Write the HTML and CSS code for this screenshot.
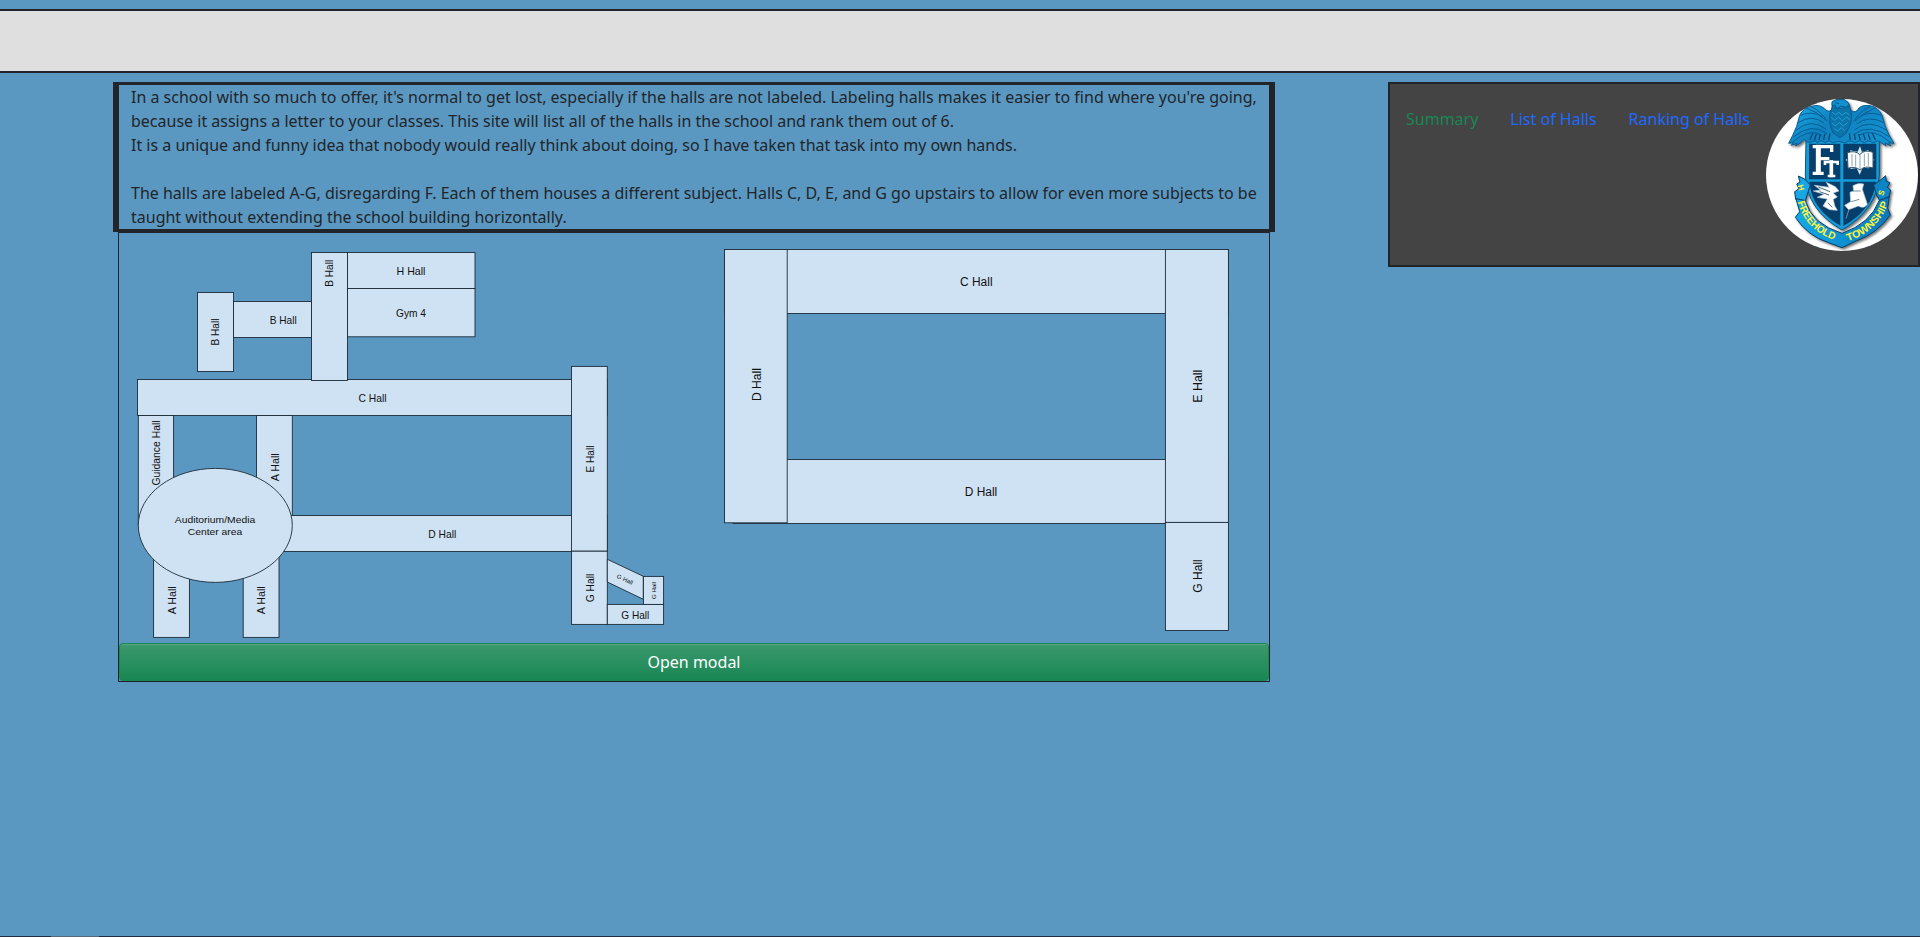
FILE: index.html
```html
<!DOCTYPE html>
<html lang="en">
<head>
<meta charset="utf-8">
<title>Halls</title>
<link rel="stylesheet" href="styles.css">
</head>
<body>
<header class="banner"></header>
<div class="layout">
  <main class="content">
    <p class="intro">In a school with so much to offer, it's normal to get lost, especially if the halls are not labeled. Labeling halls makes it easier to find where you're going, because it assigns a letter to your classes. This site will list all of the halls in the school and rank them out of 6.<br>It is a unique and funny idea that nobody would really think about doing, so I have taken that task into my own hands.<br><br>The halls are labeled A-G, disregarding F. Each of them houses a different subject. Halls C, D, E, and G go upstairs to allow for even more subjects to be taught without extending the school building horizontally.</p>
    <section class="card">
      <div class="maps">
        <svg class="map" viewBox="119 233 575 410">
          <g class="hall">
            <rect x="197.5" y="292.5" width="36" height="79"/>
            <rect x="233.5" y="301.5" width="78" height="36"/>
            <rect x="137.5" y="379.5" width="470" height="36"/>
            <rect x="311.5" y="252.5" width="36" height="128"/>
            <rect x="347.5" y="252.5" width="127.5" height="36"/>
            <rect x="347.5" y="288.5" width="127.5" height="48.3"/>
            <rect x="138.3" y="415.5" width="35.3" height="110"/>
            <rect x="256.5" y="415.5" width="35.8" height="110"/>
            <rect x="230.5" y="515.5" width="377" height="36"/>
            <rect x="153.6" y="540" width="35.8" height="97.4"/>
            <rect x="243.2" y="540" width="35.8" height="97.4"/>
            <ellipse cx="215.3" cy="525.4" rx="77" ry="57"/>
            <rect x="571.5" y="366.4" width="35.8" height="184.8"/>
            <rect x="571.5" y="551.2" width="35.8" height="73.2"/>
            <path d="M607.3 559.3 643.3 576.3V599.3L607.3 582z"/>
            <rect x="607.3" y="604.4" width="56.3" height="20"/>
            <rect x="643.4" y="576.4" width="20.2" height="28"/>
          </g>
          <g class="label">
            <text x="283.2" y="323.8" textLength="27" lengthAdjust="spacingAndGlyphs">B Hall</text>
            <text x="411" y="274.5" textLength="29" lengthAdjust="spacingAndGlyphs">H Hall</text>
            <text x="411" y="317.3" textLength="30" lengthAdjust="spacingAndGlyphs">Gym 4</text>
            <text x="372.5" y="401.6" textLength="28" lengthAdjust="spacingAndGlyphs">C Hall</text>
            <text x="442.3" y="537.7" textLength="28" lengthAdjust="spacingAndGlyphs">D Hall</text>
            <text x="635.3" y="618.5" textLength="28" lengthAdjust="spacingAndGlyphs">G Hall</text>
            <text transform="translate(219.2 332) rotate(-90)" textLength="27" lengthAdjust="spacingAndGlyphs">B Hall</text>
            <text transform="translate(332.8 273.3) rotate(-90)" textLength="27" lengthAdjust="spacingAndGlyphs">B Hall</text>
            <text transform="translate(160 453) rotate(-90)" textLength="65" lengthAdjust="spacingAndGlyphs">Guidance Hall</text>
            <text transform="translate(278.5 467.3) rotate(-90)" textLength="28" lengthAdjust="spacingAndGlyphs">A Hall</text>
            <text transform="translate(175.5 600.3) rotate(-90)" textLength="28" lengthAdjust="spacingAndGlyphs">A Hall</text>
            <text transform="translate(264.7 600.3) rotate(-90)" textLength="28" lengthAdjust="spacingAndGlyphs">A Hall</text>
            <text transform="translate(593.5 459) rotate(-90)" textLength="27" lengthAdjust="spacingAndGlyphs">E Hall</text>
            <text transform="translate(593.5 588) rotate(-90)" textLength="28.500" lengthAdjust="spacingAndGlyphs">G Hall</text>
          </g>
          <g class="label wide">
            <text x="215" y="523" textLength="80.5" lengthAdjust="spacingAndGlyphs">Auditorium/Media</text>
            <text x="215" y="535" textLength="54.5" lengthAdjust="spacingAndGlyphs">Center area</text>
          </g>
          <g class="label tiny">
            <text transform="translate(624 581.3) rotate(25)" textLength="17" lengthAdjust="spacingAndGlyphs">G Hall</text>
            <text transform="translate(656 590.5) rotate(-90)" textLength="17" lengthAdjust="spacingAndGlyphs">G Hall</text>
          </g>
        </svg>
        <svg class="map" viewBox="694 233 575 410">
          <g class="hall">
            <rect x="733" y="459.5" width="495" height="64"/>
            <rect x="724.5" y="249.5" width="504" height="64"/>
            <rect x="724.5" y="249.5" width="62.7" height="273.300"/>
            <rect x="1165.4" y="249.5" width="63" height="272.900"/>
            <rect x="1165.4" y="522.4" width="63" height="108.100"/>
          </g>
          <g class="label tall">
            <text x="976.3" y="286" textLength="32.500" lengthAdjust="spacingAndGlyphs">C Hall</text>
            <text x="981" y="495.8" textLength="32.500" lengthAdjust="spacingAndGlyphs">D Hall</text>
            <text transform="translate(760.6 384.5) rotate(-90)" textLength="33" lengthAdjust="spacingAndGlyphs">D Hall</text>
            <text transform="translate(1202 386.2) rotate(-90)" textLength="33" lengthAdjust="spacingAndGlyphs">E Hall</text>
            <text transform="translate(1202 576) rotate(-90)" textLength="33.500" lengthAdjust="spacingAndGlyphs">G Hall</text>
          </g>
        </svg>
      </div>
      <button class="open" type="button">Open modal</button>
    </section>
  </main>
  <nav class="sidebar">
    <a class="link current">Summary</a>
    <a class="link">List of Halls</a>
    <a class="link">Ranking of Halls</a>
    <svg class="logo" viewBox="48 57 456 456">
      <defs>
        <path id="ribbonLeft" d="M143 366Q168 458 272 486"/>
        <path id="ribbonRight" d="M294 484Q386 452 417 364"/>
        <linearGradient id="ribbon" x1="0" x2="1"><stop offset="0" stop-color="#14a9e8"/><stop offset="1" stop-color="#0879b8"/></linearGradient>
        <linearGradient id="feathers" x1="0" x2="1" y2=".6"><stop offset="0" stop-color="#1eb4f0"/><stop offset=".5" stop-color="#0e80bd"/><stop offset="1" stop-color="#1490cf"/></linearGradient>
      </defs>
      <circle cx="276" cy="285" r="228" fill="#fff"/>
      <g class="crest">
      <!-- shield -->
      <path d="M168 182H388V285Q383 388 276 450Q170 390 166 285z" fill="#159bd7" stroke="#075583" stroke-width="3"/>
      <path d="M177 191H271V298H177zM280 191H379V298H280zM178 305H271V437Q184 386 178 305zM280 305H378Q369 389 280 438z" fill="#063f6b"/>
      <!-- monogram -->
      <g fill="none" stroke="#fff" stroke-linecap="square">
        <path d="M205 202V276" stroke-width="15"/>
        <path d="M193 200H245V211M207 236H233M193 280H216" stroke-width="10"/>
        <path d="M244 246V286" stroke-width="11"/>
        <path d="M225 251V246H263V251M237 288H252" stroke-width="8"/>
      </g>
      <!-- book -->
      <path d="M330 198 336 216 356 210 350 227 374 240 352 247 358 265 338 263 329 284 320 264 301 267 307 249 286 240 307 229 300 211 323 215z" fill="#d7e9f2"/>
      <path d="M292 218Q316 210 329 224Q344 207 369 217V264Q345 256 330 270Q314 257 294 265z" fill="#fff" stroke="#30536a" stroke-width="3"/>
      <path d="M330 225V269M306 222V258M317 224V260M343 221V258M355 219V257" fill="none" stroke="#527990" stroke-width="2"/>
      <!-- winged foot -->
      <path d="M193 316 237 322 229 307 256 320 267 333 250 339 262 351 250 358 254 377 262 391 239 389 219 378 232 357 202 352 222 343 190 333 212 330z" fill="#fff" stroke="#b7cbd7" stroke-width="2"/>
      <path d="M205 321 240 335M209 335 237 345M233 368 247 382" fill="none" stroke="#46687f" stroke-width="3"/>
      <!-- scroll -->
      <path d="M309 317Q326 307 341 312L337 328 352 373Q342 388 325 378L296 389 284 376 302 365 300 337 311 333z" fill="#fff" stroke="#b7cbd7" stroke-width="2"/>
      <path d="M309 333H332M304 365 328 358M288 416 297 388" fill="none" stroke="#7590a2" stroke-width="3"/>
      <!-- eagle -->
      <g stroke="#075d94" stroke-width="3" stroke-linejoin="round">
        <path fill="url(#feathers)" d="M246 88Q234 101 222 85Q208 73 188 78Q160 83 149 106L140 139 128 166 116 190 130 188 124 196 141 190 137 198 154 187 162 178 168 184 181 188 195 182 202 188 214 182 226 188 239 182 248 188 267 184 284 189 299 182 314 188 329 182 344 188 354 182 371 188 383 182 394 188 407 197 406 189 423 198 416 188 432 190 417 165 405 137 396 106Q386 82 360 77Q330 73 322 91Q311 101 300 88Q299 58 271 58Q247 59 247 70z"/>
        <path d="M151 106Q186 91 219 111M145 128Q185 101 222 129M137 151Q185 112 228 148M130 171Q185 126 231 161M128 186Q175 143 215 165M183 80Q210 91 232 124M169 84Q200 94 226 120M395 106Q355 91 325 113M402 128Q355 104 320 132M411 151Q356 115 314 149M419 171Q360 128 311 163M421 187Q370 142 327 165M360 79Q330 94 311 124M375 84Q342 97 316 122" fill="none"/>
        <path d="M180 179 188 160M193 181 199 162M207 180 211 162M221 180 224 162M236 180 240 160M301 180 298 160M316 180 313 162M331 180 326 162M346 180 340 162M361 180 354 162M376 180 367 160" fill="none" stroke="#064a79" stroke-width="4"/>
        <path d="M247 80 239 104 240 132 248 158 270 173 289 159 302 132 305 105 299 79 277 86z" fill="#0c74ab"/>
        <path d="M246 96 257 105 266 96 276 106 288 97 298 105M244 112 254 121 265 111 277 122 290 111 300 120M246 129 257 138 268 127 280 138 293 128M253 146 263 153 274 143 284 153" fill="none" stroke="#2ab4e8" stroke-width="2"/>
        <path d="M246 65 261 59 283 59 297 71 291 82 272 78 260 87 256 75 246 77z" fill="#1490cf"/>
        <path d="M256 68 267 71" fill="none"/>
      </g>
      <!-- ribbon -->
      <g stroke="#073e67" stroke-width="3">
        <path d="M145 288 165 298 181 315 173 339 166 362 137 358 134 335 147 326 140 312 150 306z" fill="#18a6e4"/>
        <path d="M407 287 393 299 371 315 381 348 390 364 417 350 422 330 412 322 420 308 409 304z" fill="#0d85c4"/>
        <path d="M138 356 166 362Q185 432 276 460Q361 431 388 361L418 350 413 384 421 405Q382 460 318 483L276 503 236 488Q174 469 136 412L149 395z" fill="url(#ribbon)"/>
      </g>
      </g>
      <g class="motto">
        <text><textPath href="#ribbonLeft" textLength="164" lengthAdjust="spacingAndGlyphs">FREEHOLD</textPath></text>
        <text><textPath href="#ribbonRight" textLength="172" lengthAdjust="spacingAndGlyphs">TOWNSHIP</textPath></text>
        <text class="initial" transform="translate(145 325) rotate(75)">H</text>
        <text class="initial" transform="translate(402 341) rotate(-70)">S</text>
      </g>
    </svg>
  </nav>
</div>
<footer class="footer"><span class="footer-mark"></span></footer>
</body>
</html>
```
FILE: styles.css
```css
* { box-sizing: border-box; }
body {
  margin: 0;
  height: 937px;
  overflow: hidden;
  display: flex;
  flex-direction: column;
  background: #5a98c2;
  color: #212529;
  font: 16px/24px "Noto Sans", "Liberation Sans", sans-serif;
}
.banner {
  height: 64px;
  margin-top: 9px;
  flex: none;
  background: #dfdfdf;
  border-top: 2px solid #212529;
  border-bottom: 2px solid #212529;
}
.layout {
  display: flex;
  flex: 1;
  justify-content: space-between;
  align-items: flex-start;
  padding: 9px 0 0 113px;
}
.content { width: 1162px; }
.intro {
  margin: 0;
  padding: 0 12px;
  border: solid #212529;
  border-width: 3px 6px;
}
.card {
  width: 1152px;
  margin-left: 5px;
  border: 1px solid #212529;
}
.maps { display: flex; height: 410px; }
.map { display: block; width: 575px; height: 410px; flex: none; }
.hall { fill: #cfe2f3; stroke: #1c2b38; stroke-width: .9; }
.label {
  fill: #111;
  font-family: "Liberation Sans", Arial, sans-serif;
  font-size: 10.7px;
  text-anchor: middle;
}
.wide { font-size: 9.8px; }
.tiny { font-size: 6px; }
.tall { font-size: 12.3px; }
.open {
  display: block;
  width: 100%;
  height: 38px;
  padding: 6px 12px;
  border: 1px solid #198754;
  border-radius: 4px;
  background: #198754 linear-gradient(180deg, rgba(255, 255, 255, .15), rgba(255, 255, 255, 0));
  box-shadow: inset 0 1px 0 rgba(255, 255, 255, .15), 0 1px 1px rgba(0, 0, 0, .075);
  color: #fff;
  font: inherit;
}
.sidebar {
  display: flex;
  width: 532px;
  height: 185px;
  padding-top: 15px;
  background: #444;
  border: 2px solid #212529;
}
.link { padding: 8px 16px; color: #1f69ff; white-space: nowrap; }
.current { color: #198754; }
.logo { display: block; width: 152px; height: 152px; margin-left: auto; flex: none; }
.crest { filter: drop-shadow(5px 5px 3px rgba(0, 0, 0, .55)); }
.motto { fill: #fff33b; font: bold 31px "Liberation Sans", Arial, sans-serif; }
.initial { font-size: 24px; text-anchor: middle; }
.footer { height: 1px; flex: none; padding-left: 51px; background: #212d42; }
.footer-mark { display: block; width: 48px; height: 1px; background: #58697a; }
```
